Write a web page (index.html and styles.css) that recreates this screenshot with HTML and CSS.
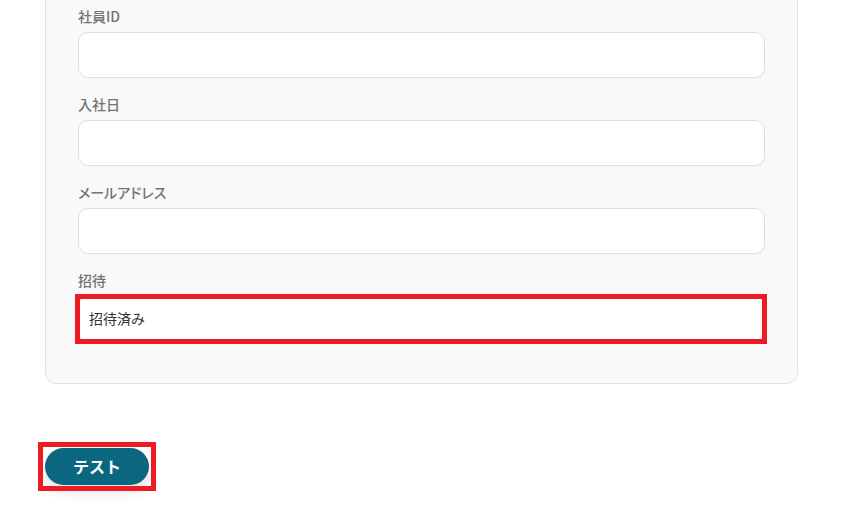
FILE: index.html
```html
<!DOCTYPE html>
<html lang="ja">
<head>
<meta charset="utf-8">
<link rel="stylesheet" href="styles.css">
</head>
<body>
<div class="page">
  <section class="card">
    <div class="field-group">
      <label class="label">社員ID</label>
      <div class="input"></div>
    </div>
    <div class="field-group">
      <label class="label">入社日</label>
      <div class="input"></div>
    </div>
    <div class="field-group">
      <label class="label">メールアドレス</label>
      <div class="input"></div>
    </div>
    <div class="field-group">
      <label class="label">招待</label>
      <div class="highlight">
        <div class="input">招待済み</div>
      </div>
    </div>
  </section>
  <div class="actions">
    <span class="highlight-btn">
      <button class="btn">テスト</button>
    </span>
  </div>
</div>
</body>
</html>
```

FILE: styles.css
```css
* { box-sizing: border-box; }
html, body {
  margin: 0;
  padding: 0;
  background: #ffffff;
  font-family: "Noto Sans CJK JP", "Noto Sans", sans-serif;
}
.page {
  padding: 0 54px 0 45px;
  overflow: hidden;
  height: 511px;
}
.card {
  margin-top: -20px;
  width: 753px;
  background: #f9f9f9;
  border: 1px solid #e3e3e3;
  border-top: none;
  border-radius: 0 0 12px 12px;
  padding: 26px 32px 41px 32px;
  display: flex;
  flex-direction: column;
  gap: 16px;
}
.field-group {
  display: flex;
  flex-direction: column;
  gap: 6px;
}
.label {
  font-size: 14px;
  line-height: 20px;
  height: 20px;
  color: #737373;
  font-weight: 500;
  font-feature-settings: "palt";
}
.input {
  height: 46px;
  background: #ffffff;
  border: 1px solid #dcdde3;
  border-radius: 10px;
  padding: 0 10px 3px;
  display: flex;
  align-items: center;
  font-size: 14px;
  color: #333333;
}
.highlight {
  position: relative;
}
.highlight::after {
  content: "";
  position: absolute;
  top: -2px;
  bottom: -2px;
  left: -3px;
  right: -2px;
  border: 5px solid #ed1c24;
  pointer-events: none;
}
.actions {
  margin-top: 64px;
  display: flex;
}
.highlight-btn {
  position: relative;
  display: inline-flex;
}
.highlight-btn::after {
  content: "";
  position: absolute;
  top: -6px;
  bottom: -6px;
  left: -7px;
  right: -7px;
  border: 5px solid #ed1c24;
  pointer-events: none;
}
.btn {
  width: 104px;
  height: 37px;
  border: none;
  border-radius: 19px;
  background: #0b6780;
  color: #ffffff;
  font-family: "Noto Sans CJK JP", "Noto Sans", sans-serif;
  font-size: 16px;
  font-weight: 700;
  box-shadow: 0 6px 14px rgba(0, 0, 0, 0.12);
  padding: 0 0 2px;
  cursor: pointer;
}
```
